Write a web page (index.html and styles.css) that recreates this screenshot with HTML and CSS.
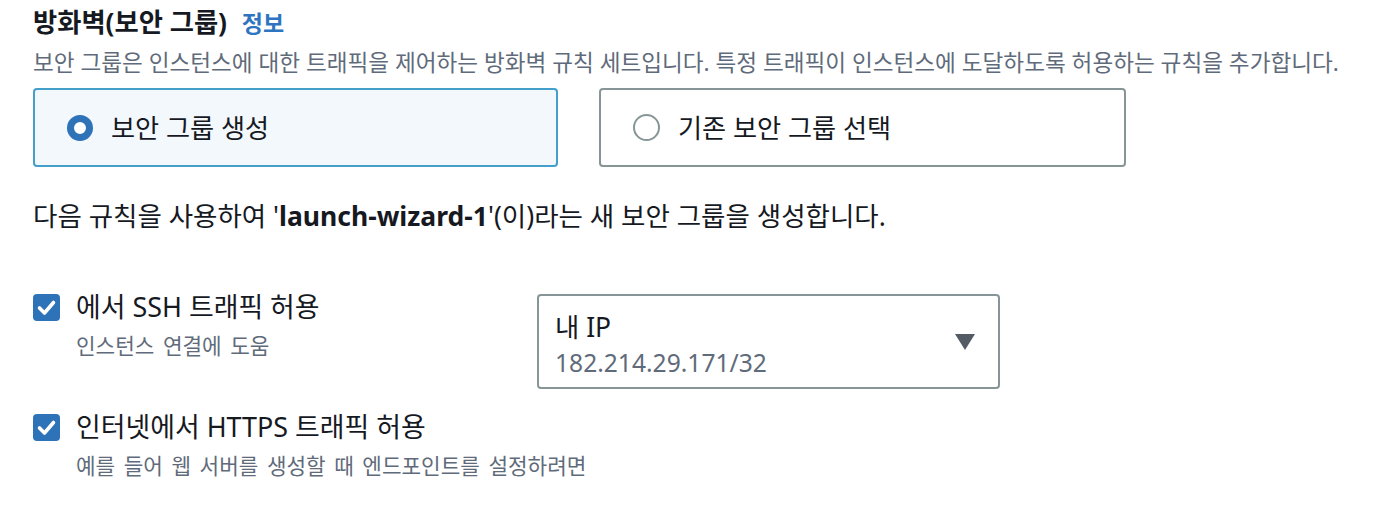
FILE: index.html
```html
<!DOCTYPE html>
<html lang="ko">
<head>
<meta charset="utf-8">
<link rel="stylesheet" href="styles.css">
</head>
<body>
<div class="page">
  <h2 class="title">방화벽(보안 그룹) <a class="info">정보</a></h2>
  <p class="desc">보안 그룹은 인스턴스에 대한 트래픽을 제어하는 방화벽 규칙 세트입니다. 특정 트래픽이 인스턴스에 도달하도록 허용하는 규칙을 추가합니다.</p>
  <div class="tiles">
    <div class="tile selected">
      <span class="radio on"></span>
      <span class="tile-label">보안 그룹 생성</span>
    </div>
    <div class="tile">
      <span class="radio"></span>
      <span class="tile-label">기존 보안 그룹 선택</span>
    </div>
  </div>
  <p class="notice">다음 규칙을 사용하여 '<b>launch-wizard-1</b>'(이)라는 새 보안 그룹을 생성합니다.</p>
  <div class="rules">
    <div class="check-option">
      <span class="checkbox"><svg viewBox="0 0 27 27" width="27" height="27"><path d="M6.5 14 L11.5 19 L20.5 8.5" fill="none" stroke="#fff" stroke-width="3.6" stroke-linecap="round" stroke-linejoin="round"/></svg></span>
      <div class="check-text">
        <div class="check-label">에서 SSH 트래픽 허용</div>
        <div class="check-sub">인스턴스 연결에 도움</div>
      </div>
    </div>
    <div class="select">
      <div class="select-text">
        <div class="select-value">내 IP</div>
        <div class="select-sub">182.214.29.171/32</div>
      </div>
      <svg class="caret" viewBox="0 0 20 16" width="20" height="16"><path d="M0 0 H20 L10 16 Z" fill="#545b64"/></svg>
    </div>
    <div class="check-option">
      <span class="checkbox"><svg viewBox="0 0 27 27" width="27" height="27"><path d="M6.5 14 L11.5 19 L20.5 8.5" fill="none" stroke="#fff" stroke-width="3.6" stroke-linecap="round" stroke-linejoin="round"/></svg></span>
      <div class="check-text">
        <div class="check-label">인터넷에서 HTTPS 트래픽 허용</div>
        <div class="check-sub">예를 들어 웹 서버를 생성할 때 엔드포인트를 설정하려면</div>
      </div>
    </div>
  </div>
</div>
</body>
</html>
```
FILE: styles.css
```css
* { box-sizing: border-box; }
html, body { margin: 0; padding: 0; background: #fff; }
body {
  font-family: "Noto Sans", "Noto Sans CJK KR", sans-serif;
  color: #16191f;
}
.page { padding: 6px 0 0 33px; }
.title {
  margin: 0;
  font-size: 26.3px;
  line-height: 32px;
  font-weight: 700;
  color: #16191f;
}
.info {
  font-size: 23px;
  color: #2f74c0;
  font-weight: 700;
  margin-left: 8px;
}
.desc {
  margin: 10px 0 0;
  font-size: 22.6px;
  line-height: 28px;
  color: #5f6b7a;
  white-space: nowrap;
}
.tiles {
  margin-top: 11px;
  display: grid;
  grid-template-columns: 525px 527px;
  column-gap: 41px;
}
.tile {
  height: 79px;
  border: 2px solid #879596;
  border-radius: 4px;
  display: flex;
  align-items: center;
  padding-left: 32px;
  gap: 18px;
}
.tile.selected {
  border-color: #44a0cb;
  background: #f2f8fc;
}
.radio {
  width: 27px;
  height: 27px;
  border-radius: 50%;
  border: 2px solid #879596;
  background: #fff;
  flex: none;
}
.radio.on {
  width: 26px;
  height: 26px;
  border: 7px solid #2e72b8;
}
.tile-label {
  font-size: 26.2px;
  line-height: 32px;
}
.notice {
  margin: 33px 0 0;
  font-size: 26.5px;
  line-height: 32px;
  white-space: nowrap;
}
.notice b { font-weight: 700; }
.rules {
  margin-top: 62px;
  display: grid;
  grid-template-columns: 504px 463px;
  row-gap: 25px;
  align-items: start;
}
.check-option {
  display: flex;
  gap: 16px;
  align-items: flex-start;
}
.checkbox {
  width: 27px;
  height: 27px;
  border-radius: 4px;
  background: #2e72b8;
  flex: none;
  display: block;
}
.checkbox svg { display: block; }
.check-text { margin-top: -1px; white-space: nowrap; }
.check-label {
  font-size: 26.9px;
  line-height: 28px;
}
.check-sub {
  margin-top: 11px;
  font-size: 21.3px;
  line-height: 28px;
  color: #5f6b7a;
  word-spacing: 3px;
}
.select {
  height: 95px;
  border: 2px solid #879596;
  border-radius: 4px;
  display: flex;
  align-items: center;
  justify-content: space-between;
  padding: 6px 23px 0 16px;
}
.select-value {
  font-size: 26.4px;
  line-height: 32px;
}
.select-sub {
  margin-top: 4px;
  font-size: 24.6px;
  line-height: 32px;
  color: #5f6b7a;
}
.caret { display: block; flex: none; margin-top: -6px; }
```
